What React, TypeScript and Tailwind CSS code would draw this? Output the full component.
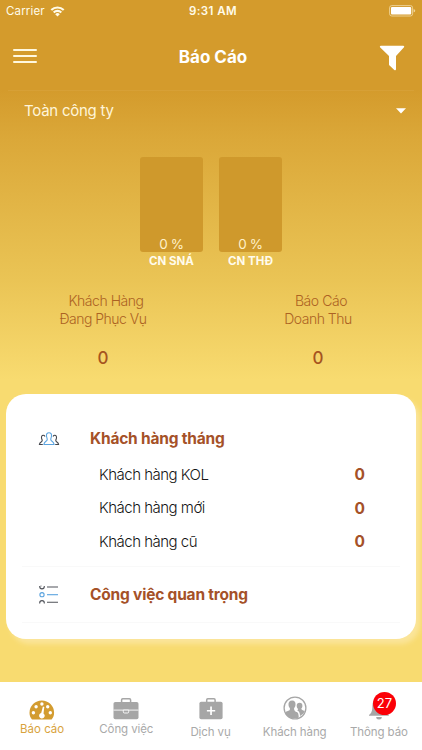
import type { ReactNode } from "react";

const Wifi = () => (
  <svg width="15" height="11" viewBox="0 0 14 11" fill="none" stroke="#fffbe9" strokeWidth="2.1">
    <path d="M0.8 4a8.8 8.8 0 0 1 12.4 0" />
    <path d="M3.2 6.4a5.4 5.4 0 0 1 7.6 0" />
    <path d="M7 10.6 4.7 8.3a3.200 3.200 0 0 1 4.600 0Z" fill="#fffbe9" stroke="none" />
  </svg>
);

const Battery = () => (
  <svg width="27" height="12" viewBox="0 0 27 12">
    <rect x="0.6" y="0.6" width="23" height="10.4" rx="2.2" fill="none" stroke="#f0d79c" strokeWidth="0.9" />
    <rect x="2" y="2" width="20.2" height="7.6" rx="1" fill="#fff" />
    <path d="M24.6 4v3.6q1.6-.5 1.6-1.8T24.6 4" fill="#f0d79c" />
  </svg>
);

const People = () => (
  <svg width="22" height="14" viewBox="0 0 22 14" fill="none" strokeWidth="1.100">
    <path d="M7 4.500C6.500 3.600 5.900 3.300 5.200 3.300c-1.300 0-1.800 1-1.700 2.400.1 1.300.7 1.900.7 2.900 0 1.500-2.600 1.200-2.800 3.900h3.400" stroke="#43464d" />
    <path d="M15 4.500c.5-.9 1.100-1.200 1.800-1.200 1.300 0 1.800 1 1.700 2.400-.1 1.300-.7 1.900-.7 2.900 0 1.500 2.600 1.200 2.800 3.900h-3.400" stroke="#43464d" />
    <path d="M11 .8c-1.900 0-2.700 1.300-2.500 3.200.1 1.500.8 2.200.7 3.700C9.100 9.400 6.100 9.200 5.900 12.500h10.200c-.2-3.300-3.200-3.100-3.300-4.800-.1-1.500.6-2.200.7-3.700C13.700 2.100 12.900.8 11 .8Z" stroke="#5aa3df" />
  </svg>
);

const Tasks = () => (
  <svg width="20" height="20" viewBox="0 0 20 20" fill="none" strokeWidth="1.100">
    <path d="M.7 1v.6a2.300 2.300 0 0 0 4.600 0V1M1.600 1h.8M8 2h11M.7 18.500v-.6a2.300 2.300 0 0 1 4.600 0v.6M8 17.300h11" stroke="#50535a" />
    <circle cx="3" cy="9.700" r="2.100" stroke="#5aa3df" />
    <path d="M8 9.700h11" stroke="#5aa3df" />
  </svg>
);

const Gauge = () => (
  <svg width="26" height="20" viewBox="0 0 26 20">
    <path d="M3 19.500C1.400 17.700.5 15.500.5 12.800a12.300 12.300 0 0 1 24.600 0c0 2.700-.9 4.900-2.500 6.700Z" fill="#d39c30" />
    <g fill="#fff">
      <circle cx="4.400" cy="12.800" r="1.700" />
      <circle cx="7.100" cy="6.800" r="1.700" />
      <circle cx="12.900" cy="4" r="1.700" />
      <circle cx="18.700" cy="6.800" r="1.700" />
      <circle cx="21.300" cy="12.800" r="1.700" />
      <path d="m13.900 6.600 1.400.3-.8 6.500a2.800 2.800 0 1 1-2.300-.4Z" />
    </g>
  </svg>
);

const Briefcase = () => (
  <svg width="26" height="22" viewBox="0 0 26 22">
    <path d="M8.600 4V1.900q0-1.100 1.100-1.100h6.800q1.100 0 1.100 1.100V4" fill="none" stroke="#a6a6a6" strokeWidth="1.500" />
    <rect x=".5" y="4" width="25" height="17.300" rx="1.800" fill="#a6a6a6" />
    <path d="M.5 12.100h25" stroke="#fff" strokeWidth=".9" />
    <path d="M10.300 12.100v1.700q0 1.200 1.200 1.200h3q1.200 0 1.200-1.200v-1.700Z" fill="#a6a6a6" stroke="#fff" strokeWidth=".9" />
  </svg>
);

const MedKit = () => (
  <svg width="24" height="22" viewBox="0 0 24 22">
    <path d="M7.700 4V1.900q0-1.100 1.100-1.100h6.200q1.100 0 1.100 1.100V4" fill="none" stroke="#a6a6a6" strokeWidth="1.500" />
    <rect x=".4" y="3.800" width="23.200" height="17.500" rx="1.800" fill="#a6a6a6" />
    <path d="M11.200 8.500h1.700v3.400h3.300v1.700h-3.300V17h-1.700v-3.400H7.900v-1.700h3.300Z" fill="#fff" />
  </svg>
);

const Customers = () => (
  <svg width="24" height="24" viewBox="0 0 24 24">
    <circle cx="12" cy="12" r="10.900" fill="none" stroke="#a6a6a6" strokeWidth="1.300" />
    <path d="M9.100 4.600c-2.600 0-3.800 1.800-3.600 4.200.1 1.700.7 2.600 1.400 3.400.2 1.700-.2 2-1.600 2.500-1.500.6-2.700 1-3.200 2.200a10 10 0 0 0 9.700 5.400c2.500 0 4-.5 4-.5-.2-3.500-.5-4.900-1.900-5.700-1.300-.7-2.900-.9-2.800-3.900.7-.8 1.300-1.700 1.400-3.400.2-2.400-.8-4.200-3.400-4.200Z" fill="#a6a6a6" />
    <path d="M16.600 6.800c-1.900 0-3 1.200-2.900 3.100.1 1.300.5 2.300 1.200 2.800 0 1 .1 1.300-.7 1.700 2.200.9 2.700 2.500 2.800 5.500 2-.8 4-2.600 4.900-4.800-.9-.8-3.600-1-3.700-2.400.6-.5 1.100-1.500 1.200-2.800.1-1.900-.9-3.100-2.800-3.100Z" fill="#a6a6a6" />
  </svg>
);

const Bell = () => (
  <svg width="22" height="24" viewBox="0 0 22 24" fill="#a6a6a6">
    <path d="M11 1q1.500 0 1.500 1.600c3.400.7 5 3.300 5 7.100 0 5 .8 7.500 3.300 9.300v.8H1V19c2.500-1.800 3.400-4.300 3.400-9.300 0-3.800 1.700-6.400 5.100-7.100Q9.500 1 11 1Z" />
    <path d="M8.200 20.900h5.600a2.800 2.500 0 0 1-5.600 0Z" />
  </svg>
);

const Bar = ({ name }: { name: string }) => (
  <div className="flex w-[63px] flex-col items-center">
    <div className="flex h-[95px] w-full items-end justify-center rounded-[3px] bg-[#cf992c] text-[13.500px] leading-[15px] tracking-[-0.4px] text-[#fff1c9]">
      0 %
    </div>
    <div className="mt-[2px] whitespace-nowrap text-[11.500px] font-bold leading-[15px] text-[#fffbed]">{name}</div>
  </div>
);

const Summary = ({ first, second }: { first: string; second: string }) => (
  <div className="flex w-[110px] flex-col items-center text-[#ac6223]">
    <div className="whitespace-nowrap pl-[6px] text-[14px] font-light leading-[17.500px] tracking-[-0.45px]">{first}</div>
    <div className="whitespace-nowrap text-[14px] font-light leading-[17.500px] tracking-[-0.5px]">{second}</div>
    <div className="mt-[20px] text-[17px] font-medium leading-[22px] text-[#a65420]">0</div>
  </div>
);

const Row = ({ label }: { label: string }) => (
  <div className="flex h-[33.500px] items-center justify-between pl-[93px] pr-[51px]">
    <span className="text-[15px] font-light tracking-[-0.5px] text-[#151515]">{label}</span>
    <span className="text-[15.500px] font-bold text-[#a55128]">0</span>
  </div>
);

const Tab = ({ icon, label, active = false, low = false }: { icon: ReactNode; label: string; active?: boolean; low?: boolean }) => (
  <div className="flex flex-1 flex-col items-center">
    <div className={`flex items-end justify-center ${active || !low ? "h-[38px]" : "h-[39px] pb-[1px]"}`}>{icon}</div>
    <div className={`whitespace-nowrap text-[11.500px] leading-[15px] ${low ? "mt-[4px]" : "mt-[2px]"} ${active ? "text-[#d9a33d]" : "tracking-[-0.1px] text-[#a9a9a9]"}`}>{label}</div>
  </div>
);

export default function App() {
  return (
    <div className="flex h-[750px] w-[422px] flex-col overflow-hidden bg-[linear-gradient(180deg,#d49b2c_0px,#d49b2c_90px,#dba839_140px,#eac455_280px,#f8db70_380px,#f8db70_100%)] font-['Inter','Noto_Sans',sans-serif]">
      <div className="grid h-[22px] shrink-0 grid-cols-3 items-center px-[6px] text-[11.500px] leading-[22px] text-[#fffbe9]">
        <div className="flex items-center gap-[5px]"><span className="tracking-[0.15px]">Carrier</span><Wifi /></div>
        <div className="whitespace-nowrap pl-[4px] text-center font-semibold tracking-[0.4px]">9:31 AM</div>
        <div className="flex justify-end"><Battery /></div>
      </div>

      <header className="grid h-[68px] shrink-0 grid-cols-3 items-center pl-[13px] pr-[17px]">
        <div className="flex w-[24px] flex-col gap-[4px]">
          <div className="h-[2px] rounded bg-[#fff8df]" />
          <div className="h-[2px] rounded bg-[#fff8df]" />
          <div className="h-[2px] rounded bg-[#fff8df]" />
        </div>
        <h1 className="pl-[8px] pt-[4px] text-center text-[17px] font-bold text-white">Báo Cáo</h1>
        <svg className="mt-[4px] justify-self-end" width="26" height="26" viewBox="0 0 26 26">
          <path d="M1.800 .7h22.500q1.500 0 .7 1.500L17 11v13.300q-.2 1.500-1.700.6l-4.700-4.300q-.6-.5-.6-1.200V11L1 2.200Q.3 .7 1.800 .7Z" fill="#fff" />
        </svg>
      </header>

      <div className="mx-[8px] flex h-[40px] shrink-0 items-center justify-between border-t border-[#d7a036] pl-[16px] pr-[8px] text-[15px] text-[#fff5d9]">
        <span className="pt-[2px] tracking-[-0.25px]">Toàn công ty</span>
        <svg width="10" height="6" viewBox="0 0 10 6"><path d="M0 .3h10L5 5.500Z" fill="#fff" /></svg>
      </div>

      <div className="mt-[27px] flex justify-center gap-[16px]">
        <Bar name="CN SNÁ" />
        <Bar name="CN THĐ" />
      </div>

      <div className="mt-[23px] flex h-[102px] shrink-0 justify-between pl-[48px] pr-[49px]">
        <Summary first="Khách Hàng" second="Đang Phục Vụ" />
        <Summary first="Báo Cáo" second="Doanh Thu" />
      </div>

      <main className="mx-[6px] h-[245px] shrink-0 rounded-[20px] bg-white shadow-[4px_5px_5px_#fbe59a]">
        <div className="flex h-[64px] items-end pl-[32px]">
          <div className="flex h-[38px] w-[52px] items-center"><People /></div>
          <h2 className="text-[15.500px] font-bold leading-[38px] tracking-[-0.2px] text-[#a55128]">Khách hàng tháng</h2>
        </div>
        <Row label="Khách hàng KOL" />
        <Row label="Khách hàng mới" />
        <Row label="Khách hàng cũ" />
        <div className="mx-[16px] mt-[7px] flex h-[57px] items-center border-y border-[#f9f9f9] pl-[17px]">
          <div className="w-[51px] pt-[2px]"><Tasks /></div>
          <h2 className="pt-px text-[15.500px] font-bold tracking-[-0.2px] text-[#a55128]">Công việc quan trọng</h2>
        </div>
      </main>

      <nav className="mt-auto flex h-[68px] shrink-0 bg-white pr-px">
        <Tab icon={<Gauge />} label="Báo cáo" active />
        <Tab icon={<Briefcase />} label="Công việc" />
        <Tab icon={<MedKit />} label="Dịch vụ" low />
        <Tab icon={<Customers />} label="Khách hàng" low />
        <Tab
          icon={
            <div className="relative">
              <Bell />
              <span className="absolute -top-[4px] left-[5px] flex size-[23px] items-center justify-center rounded-full bg-[#fb0007] text-[13px] text-white">27</span>
            </div>
          }
          label="Thông báo"
          low
        />
      </nav>
    </div>
  );
}
